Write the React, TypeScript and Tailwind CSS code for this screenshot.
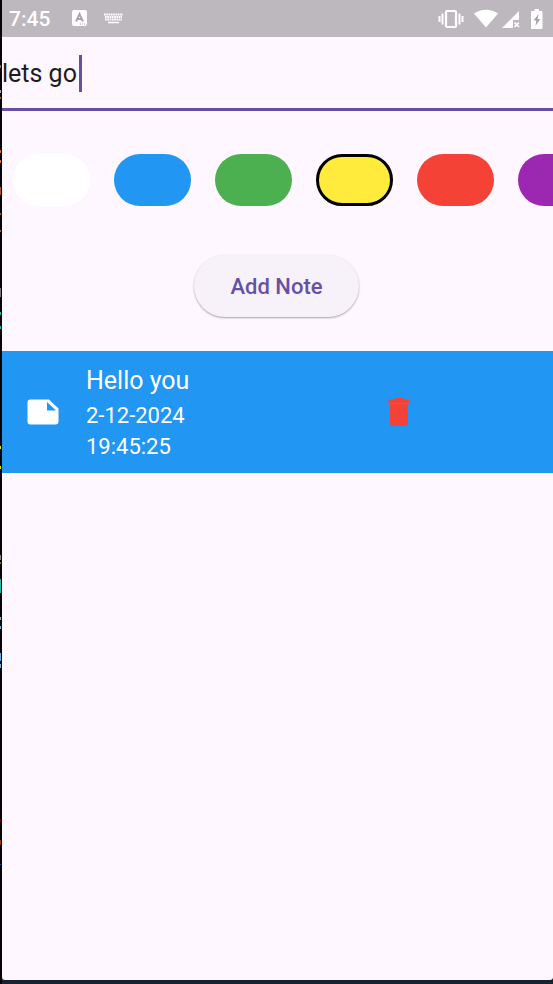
import { useState } from "react";

const swatches = [
  { name: "White", color: "bg-white" },
  { name: "Blue", color: "bg-[#2196f3]" },
  { name: "Green", color: "bg-[#4caf50]" },
  { name: "Yellow", color: "bg-[#ffeb3b]" },
  { name: "Red", color: "bg-[#f44336]" },
  { name: "Purple", color: "bg-[#9c27b0]" },
];

const specks = [
  { y: 65, h: 3, fill: "#777" },
  { y: 90, h: 3, fill: "#aaa" },
  { y: 97, h: 2, fill: "#a86a20" },
  { y: 150, h: 3, fill: "#e0683c" },
  { y: 160, h: 3, fill: "#e0683c" },
  { y: 187, h: 8, fill: "#b84a28" },
  { y: 213, h: 2, fill: "#b06038" },
  { y: 230, h: 2, fill: "#b06038" },
  { y: 288, h: 9, fill: "#777" },
  { y: 312, h: 3, fill: "#20b8a8" },
  { y: 326, h: 3, fill: "#20b8a8" },
  { y: 446, h: 3, fill: "#f0e000" },
  { y: 466, h: 3, fill: "#f0e000" },
  { y: 555, h: 5, fill: "#8a8078" },
  { y: 562, h: 2, fill: "#8a6a40" },
  { y: 579, h: 14, fill: "#28b8a8" },
  { y: 617, h: 3, fill: "#70b8e0" },
  { y: 626, h: 3, fill: "#70b8e0" },
  { y: 653, h: 8, fill: "#60a8e8" },
  { y: 664, h: 4, fill: "#70b8e0" },
  { y: 820, h: 1, fill: "#c01010" },
  { y: 840, h: 5, fill: "#a03010" },
  { y: 864, h: 1, fill: "#2050a0" },
];

function StatusBar() {
  return (
    <header className="flex h-[37px] items-center bg-[#bdb8be] pr-2.5 pl-[7px] text-white">
      <span className="text-[21px] leading-6 font-medium">7:45</span>
      <svg className="ml-[22px] h-[17px] w-[15px]" viewBox="0 0 15 17" aria-hidden="true">
        <rect width="15" height="16" rx="2" fill="white" />
        <path d="M4 11.5 7.500 4l3.500 7.500M5 9h5" fill="none" stroke="#aaa5ab" strokeWidth="1.900" />
        <path d="M8 14h1m1 0h1m1 0h1" stroke="#aaa5ab" strokeWidth="1" />
      </svg>
      <svg className="ml-[17px] h-[11px] w-[19px]" viewBox="0 0 19 11" aria-hidden="true">
        <path d="M0 1.500h19M1 4h17M1 6.500h17" stroke="white" strokeWidth="1.800" strokeDasharray="1.700 .6" />
        <path d="M4 9.500h11" stroke="white" strokeWidth="1.500" />
      </svg>
      <div className="ml-auto flex items-center">
        <svg className="h-5 w-[26px]" viewBox="0 0 26 20" fill="none" stroke="white" aria-hidden="true">
          <rect x="8" y="2" width="10" height="16" rx="1" strokeWidth="2.200" />
          <path d="M4.500 4.500v11M21.500 4.500v11" strokeWidth="2" />
          <path d="M1.500 7v6M24.500 7v6" strokeWidth="2" />
        </svg>
        <svg className="ml-2.5 h-5 w-6" viewBox="0 0 24 20" aria-hidden="true">
          <path d="M0 4.500C7-.6 17-.6 24 4.500L12 18.500Z" fill="white" />
        </svg>
        <svg className="ml-1 h-5 w-[18px]" viewBox="0 0 18 20" aria-hidden="true">
          <path d="M17 2v9h-6v8H0Z" fill="white" />
          <path d="m12.500 13.500 4.500 4.500m0-4.500-4.500 4.500" stroke="white" strokeWidth="1.700" />
        </svg>
        <svg className="ml-[11px] h-5 w-3" viewBox="0 0 12 20" aria-hidden="true">
          <path d="M3.500 0h4.500v2h2.500a1 1 0 0 1 1 1v16a1 1 0 0 1-1 1h-9.500a1 1 0 0 1-1-1V3a1 1 0 0 1 1-1H3.500Z" fill="white" />
          <path d="M7.500 5 2.500 11.500h2.700L4.500 17l4.700-7H6.700Z" fill="#aaa5ab" />
        </svg>
      </div>
    </header>
  );
}

export default function App() {
  const [text, setText] = useState("lets go");
  const [selected, setSelected] = useState("Yellow");

  return (
    <div className="relative flex min-h-screen flex-col overflow-hidden bg-[#15222f] pb-1 pl-0.5 font-[Roboto,sans-serif]">
      <svg className="absolute top-0 left-0 h-full w-0.5" aria-hidden="true">
        <rect width="2" height="100%" fill="#050308" />
        {specks.map((s) => (
          <rect key={s.y} y={s.y} width="1" height={s.h} fill={s.fill} />
        ))}
      </svg>
      <div className="flex grow flex-col overflow-hidden rounded-b-[3px] bg-[#fef7ff]">
        <StatusBar />
        <main>
          <div className="relative">
            <input
              aria-label="Note"
              value={text}
              onChange={(e) => setText(e.target.value)}
              className="block h-[74px] w-full border-b-3 border-[#6750a4] pt-0.5 text-[25px] text-[#1d1b20] caret-[#6750a4] outline-none"
            />
            {text === "lets go" && (
              <span className="absolute top-[18px] left-[77px] h-[37px] w-[3px] bg-[#6750a4]" />
            )}
          </div>

          <div className="mt-[43px] flex gap-6 overflow-hidden pl-[11px]">
            {swatches.map((s) => (
              <button
                key={s.name}
                type="button"
                aria-label={s.name}
                aria-pressed={selected === s.name}
                onClick={() => setSelected(s.name)}
                className={`h-[52px] w-[77px] shrink-0 rounded-full ${s.color} ${
                  selected === s.name ? "border-3 border-black" : ""
                }`}
              />
            ))}
          </div>

          <div className="mt-[49px] flex justify-center pr-0.5">
            <button
              type="button"
              className="h-[62px] rounded-full bg-[#f7f2fa] px-9 text-[22px] font-medium text-[#6750a4] shadow-[0_1px_2px_rgba(0,0,0,0.35)]"
            >
              Add Note
            </button>
          </div>

          <article className="mt-[34px] flex h-[122px] items-center bg-[#2196f3] pl-[25px] text-white">
            <svg className="h-[26px] w-8 shrink-0" viewBox="0 0 32 26" aria-hidden="true">
              <path
                d="M3 .5h19L31.500 9.500V22.500a3 3 0 0 1-3 3H3.500a3 3 0 0 1-3-3V3.500a3 3 0 0 1 3-3Zm17 2.500V11.500h9Z"
                fill="white"
                fillRule="evenodd"
              />
            </svg>
            <div className="ml-[27px] w-[302px]">
              <h2 className="text-[25px] leading-[38px]">Hello you</h2>
              <p className="text-[22px] leading-[31px]">2-12-2024</p>
              <p className="text-[22px] leading-[31px]">19:45:25</p>
            </div>
            <button type="button" aria-label="Delete note" className="h-7 w-[22px] shrink-0">
              <svg className="h-7 w-[22px]" viewBox="0 0 22 28" aria-hidden="true">
                <path
                  d="M.5 1.500H6L7.500 0h7L16 1.500h5.500v3.500H.5ZM2 6h18V25a3 3 0 0 1-3 3H5a3 3 0 0 1-3-3Z"
                  fill="#f44336"
                />
              </svg>
            </button>
          </article>
        </main>
      </div>
    </div>
  );
}
